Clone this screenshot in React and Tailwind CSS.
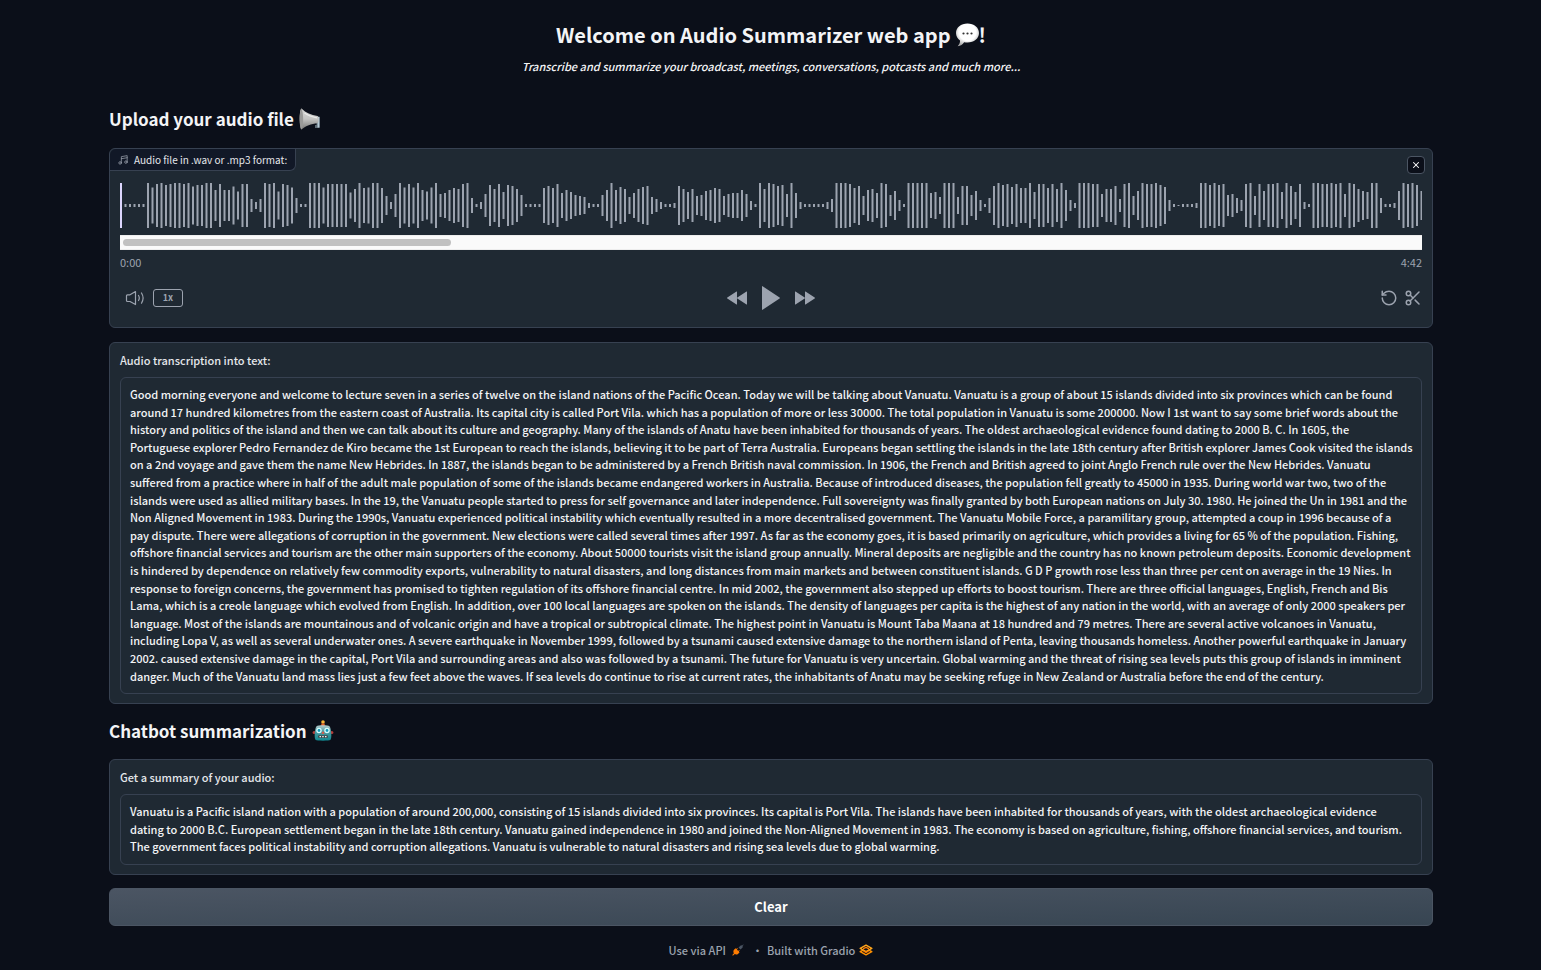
import { Scissors, RotateCcw, X } from "lucide-react";

const BARS = [
  45, 3, 3, 3, 3, 3, 45, 36, 43, 45, 41, 43, 45, 45, 43, 45, 38, 41, 41, 45, 45, 31, 43, 31, 31, 38, 28, 43, 43, 13,
  7, 13, 45, 43, 45, 28, 43, 41, 36, 15, 3, 3, 45, 45, 45, 36, 43, 43, 43, 43, 43, 26, 33, 45, 35, 36, 45, 45, 35, 19,
  7, 23, 45, 36, 43, 36, 45, 31, 28, 36, 45, 23, 25, 31, 35, 33, 43, 45, 15, 3, 7, 23, 41, 33, 43, 27, 41, 39, 33, 21,
  3, 3, 3, 3, 35, 39, 35, 43, 25, 31, 27, 21, 19, 17, 5, 3, 3, 21, 31, 45, 31, 37, 33, 17, 25, 33, 37, 39, 17, 13,
  7, 3, 3, 5, 39, 33, 27, 33, 19, 21, 29, 31, 35, 33, 19, 23, 25, 25, 31, 23, 9, 3, 45, 33, 45, 43, 39, 41, 23, 45,
  25, 7, 3, 3, 3, 3, 3, 7, 13, 45, 45, 45, 43, 35, 39, 19, 31, 33, 25, 45, 43, 21, 29, 11, 3, 45, 45, 45, 45, 45,
  25, 27, 17, 45, 45, 45, 17, 39, 39, 21, 29, 11, 3, 15, 39, 45, 41, 43, 37, 43, 35, 35, 45, 27, 43, 43, 35, 43, 33, 45,
  31, 11, 5, 45, 45, 45, 43, 43, 23, 33, 33, 39, 13, 43, 45, 19, 29, 45, 43, 43, 45, 41, 37, 11, 3, 1, 3, 3, 3, 5,
  45, 45, 41, 45, 41, 43, 21, 23, 15, 11, 43, 45, 19, 43, 29, 43, 43, 45, 27, 45, 39, 27, 43, 7, 3, 45, 45, 43, 43, 45,
  43, 45, 23, 45, 43, 33, 29, 27, 45, 45, 15, 3, 3, 5, 29, 45, 43, 45, 41, 29,
];

const TRANSCRIPT = [
  "Good morning everyone and welcome to lecture seven in a series of twelve on the island nations of the Pacific Ocean. Today we will be talking about Vanuatu. Vanuatu is a group of about 15 islands divided into six provinces which can be found",
  "around 17 hundred kilometres from the eastern coast of Australia. Its capital city is called Port Vila. which has a population of more or less 30000. The total population in Vanuatu is some 200000. Now I 1st want to say some brief words about the",
  "history and politics of the island and then we can talk about its culture and geography. Many of the islands of Anatu have been inhabited for thousands of years. The oldest archaeological evidence found dating to 2000 B. C. In 1605, the",
  "Portuguese explorer Pedro Fernandez de Kiro became the 1st European to reach the islands, believing it to be part of Terra Australia. Europeans began settling the islands in the late 18th century after British explorer James Cook visited the islands",
  "on a 2nd voyage and gave them the name New Hebrides. In 1887, the islands began to be administered by a French British naval commission. In 1906, the French and British agreed to joint Anglo French rule over the New Hebrides. Vanuatu",
  "suffered from a practice where in half of the adult male population of some of the islands became endangered workers in Australia. Because of introduced diseases, the population fell greatly to 45000 in 1935. During world war two, two of the",
  "islands were used as allied military bases. In the 19, the Vanuatu people started to press for self governance and later independence. Full sovereignty was finally granted by both European nations on July 30. 1980. He joined the Un in 1981 and the",
  "Non Aligned Movement in 1983. During the 1990s, Vanuatu experienced political instability which eventually resulted in a more decentralised government. The Vanuatu Mobile Force, a paramilitary group, attempted a coup in 1996 because of a",
  "pay dispute. There were allegations of corruption in the government. New elections were called several times after 1997. As far as the economy goes, it is based primarily on agriculture, which provides a living for 65 % of the population. Fishing,",
  "offshore financial services and tourism are the other main supporters of the economy. About 50000 tourists visit the island group annually. Mineral deposits are negligible and the country has no known petroleum deposits. Economic development",
  "is hindered by dependence on relatively few commodity exports, vulnerability to natural disasters, and long distances from main markets and between constituent islands. G D P growth rose less than three per cent on average in the 19 Nies. In",
  "response to foreign concerns, the government has promised to tighten regulation of its offshore financial centre. In mid 2002, the government also stepped up efforts to boost tourism. There are three official languages, English, French and Bis",
  "Lama, which is a creole language which evolved from English. In addition, over 100 local languages are spoken on the islands. The density of languages per capita is the highest of any nation in the world, with an average of only 2000 speakers per",
  "language. Most of the islands are mountainous and of volcanic origin and have a tropical or subtropical climate. The highest point in Vanuatu is Mount Taba Maana at 18 hundred and 79 metres. There are several active volcanoes in Vanuatu,",
  "including Lopa V, as well as several underwater ones. A severe earthquake in November 1999, followed by a tsunami caused extensive damage to the northern island of Penta, leaving thousands homeless. Another powerful earthquake in January",
  "2002. caused extensive damage in the capital, Port Vila and surrounding areas and also was followed by a tsunami. The future for Vanuatu is very uncertain. Global warming and the threat of rising sea levels puts this group of islands in imminent",
  "danger. Much of the Vanuatu land mass lies just a few feet above the waves. If sea levels do continue to rise at current rates, the inhabitants of Anatu may be seeking refuge in New Zealand or Australia before the end of the century.",
].join("\n");

const SUMMARY = [
  "Vanuatu is a Pacific island nation with a population of around 200,000, consisting of 15 islands divided into six provinces. Its capital is Port Vila. The islands have been inhabited for thousands of years, with the oldest archaeological evidence",
  "dating to 2000 B.C. European settlement began in the late 18th century. Vanuatu gained independence in 1980 and joined the Non-Aligned Movement in 1983. The economy is based on agriculture, fishing, offshore financial services, and tourism.",
  "The government faces political instability and corruption allegations. Vanuatu is vulnerable to natural disasters and rising sea levels due to global warming.",
].join("\n");

function SpeechBubble() {
  return (
    <svg className="size-6 shrink-0" viewBox="0 0 24 24" aria-hidden="true">
      <defs>
        <radialGradient id="bubble" cx="0.5" cy="0.38" r="0.62">
          <stop offset="0.6" stopColor="#ffffff" />
          <stop offset="1" stopColor="#a9a9a9" />
        </radialGradient>
      </defs>
      <path d="M12.500 0.500C6 0.500 1 4.500 1 10c0 3.200 1.600 5.800 4 7.500 0.200 2-0.700 4-2.300 5.700 3-0.300 5-1.700 6.400-3.900 1.100 0.200 2.200 0.200 3.400 0.200C19 19.500 24 15.500 24 10S19 0.500 12.500 0.500z" fill="url(#bubble)" />
      <circle cx="8.500" cy="10.500" r="1.100" fill="#333" />
      <circle cx="12.500" cy="10.500" r="1.100" fill="#333" />
      <circle cx="16.500" cy="10.500" r="1.100" fill="#333" />
    </svg>
  );
}

function Megaphone() {
  return (
    <svg className="size-6 shrink-0" viewBox="0 0 24 24" aria-hidden="true">
      <defs>
        <linearGradient id="horn" x1="0" y1="0" x2="0" y2="1">
          <stop offset="0" stopColor="#d8d8d6" />
          <stop offset="0.5" stopColor="#c4c4c2" />
          <stop offset="1" stopColor="#777775" />
        </linearGradient>
      </defs>
      <path d="M15 9.500h6.500V21h-4.500v-3h1.500v-5H15z" fill="#5d6b74" />
      <path d="M19.500 10h2v10.500h-2z" fill="#b8cdd8" />
      <path d="M3.500 1.500C8 6 13 8 19.500 9c1.500 0.500 1.500 6.500 0 7.200C13 17 8 18.500 3.500 22.500 1.200 21 1 3 3.500 1.500z" fill="url(#horn)" />
      <path d="M3.500 1.500c2 3 2.400 18 0 21C1.300 21 1 3 3.500 1.500z" fill="#9a9a98" />
      <path d="M6.500 6c4 3 8 4 12.500 4.800" stroke="#ffffff" strokeWidth="1.200" fill="none" opacity="0.600" />
    </svg>
  );
}

function Robot() {
  return (
    <svg className="size-6 shrink-0" viewBox="0 0 24 24" aria-hidden="true">
      <defs>
        <linearGradient id="face" x1="0" y1="0" x2="0" y2="1">
          <stop offset="0" stopColor="#b9cfd0" />
          <stop offset="0.4" stopColor="#4f9aa0" />
          <stop offset="1" stopColor="#0f8790" />
        </linearGradient>
      </defs>
      <circle cx="12" cy="3" r="1.800" fill="#f5b638" />
      <path d="M10.300 4.500h3.400V7h-3.400z" fill="#e8682c" />
      <circle cx="3.200" cy="13.500" r="1.600" fill="#b83a36" />
      <circle cx="20.800" cy="13.500" r="1.600" fill="#b83a36" />
      <path d="M5.500 7.200C7 5.800 17 5.800 18.500 7.200 20.300 9.500 21 19 19.500 20.800c-1.500 1.200-13.500 1.200-15 0C3 19 3.700 9.500 5.500 7.200z" fill="url(#face)" />
      <circle cx="8" cy="11.500" r="2.700" fill="#d9ffff" />
      <circle cx="16" cy="11.500" r="2.700" fill="#d9ffff" />
      <circle cx="8" cy="11.500" r="1.400" fill="#1597b8" />
      <circle cx="16" cy="11.500" r="1.400" fill="#1597b8" />
      <path d="M12 12l1.600 2.800h-3.200z" fill="#f0513e" />
      <rect x="7" y="16.200" width="10" height="2.800" rx="1.200" fill="#3d4a4d" />
      <path d="M8.500 17.600h1.500M11.200 17.600h1.500M14 17.600h1.500" stroke="#f2f2f2" strokeWidth="1.400" />
    </svg>
  );
}

function MusicIcon() {
  return (
    <svg className="size-[10px] shrink-0 text-[#9ca3af]" viewBox="0 0 24 24" fill="none" stroke="currentColor" strokeWidth="1.800" strokeLinecap="round" strokeLinejoin="round" aria-hidden="true">
      <path d="M8 19V4l14-2.500V17" />
      <path d="M8 9l14-2.500" />
      <circle cx="5" cy="19" r="3" />
      <circle cx="19" cy="17" r="3" />
    </svg>
  );
}

function VolumeIcon() {
  return (
    <svg className="h-4 w-5" viewBox="0 0 20 16" fill="none" stroke="currentColor" strokeWidth="1.200" strokeLinecap="round" strokeLinejoin="round" aria-hidden="true">
      <path d="M1.500 6v4.500q0 1 1 1h2.500l5.500 3V1.500L5 4.800H2.500q-1 0-1 1.200z" />
      <path d="M13.500 5.500q1.600 2.500 0 5M16.500 3q3.200 5 0 10.200" />
    </svg>
  );
}

function PlugIcon() {
  return (
    <svg className="size-3" viewBox="0 0 12 12" aria-hidden="true">
      <path d="M6.500 3.500L9 1.200l1 .3L11.300.4l.4.4-1.100 1.200.2 1.200L8.500 5.600z" fill="#4b5563" />
      <path d="M2 5.800l1.500-1.600.8.800.9-.9.600.6-.9.900 1.300 1.300.9-.9.600.6-.9.900.8.800L6 9.900c-1.200.9-2.500.7-3.200.2L.9 11.700l-.6-.6L1.900 9.300C1.200 8.200 1.200 6.800 2 5.800z" fill="#ff7c00" />
    </svg>
  );
}

function GradioLogo() {
  return (
    <svg className="h-3 w-[14px]" viewBox="0 0 14 12" fill="none" strokeLinejoin="round" strokeLinecap="round" aria-hidden="true">
      <path d="M1.200 7.600L4.200 6.100M9.800 6.100l3 1.500L7 10.800 1.200 7.600" stroke="#ff9000" strokeWidth="1.500" />
      <path d="M7 1.200l5.800 3.200L7 7.600 1.200 4.400z" stroke="#ffa51c" strokeWidth="1.500" />
      <path d="M4.500 4.600l2.500-1.200 2.500 1.200M4.800 7.200L7 8.400l2.200-1.200" stroke="#ff7c00" strokeWidth="1.200" />
    </svg>
  );
}

function Waveform() {
  return (
    <svg className="block h-[45px] w-full" viewBox="0 0 1302 45" preserveAspectRatio="none" role="img" aria-label="Audio waveform">
      {BARS.map((height, index) => (
        <rect key={index} x={index * 4.5} y={(45 - height) / 2} width="2" height={height} fill="#9ca3af" />
      ))}
      <rect x="0" y="0" width="2" height="45" fill="#ddd6fe" />
    </svg>
  );
}

function TextPanel({ id, label, value, rows }) {
  return (
    <section className="rounded-md border border-[#374151] bg-[#1f2933] px-[10px] pt-2 pb-[9px]">
      <label htmlFor={id} className="mb-2 block text-[11px] leading-[18px] font-medium text-[#e5e7eb]">
        {label}
      </label>
      <textarea
        id={id}
        readOnly
        rows={rows}
        defaultValue={value}
        className="block field-sizing-content w-full resize-none overflow-hidden rounded-md border border-[#374151] bg-transparent py-2 pr-1 pl-[9px] text-[11px] leading-[1.6] font-medium text-[#f3f4f6] outline-none"
      />
    </section>
  );
}

export default function App() {
  return (
    <div className="min-h-screen bg-[#0b0f19] font-['Noto_Sans_CJK_SC',sans-serif] text-[#f3f4f6]">
      <main className="pr-[108px] pb-2 pl-[109px]">
        <header className="flex flex-col items-center pt-[19px]">
          <h1 className="flex items-center gap-1 text-[20px] leading-8 font-bold">
            <span>Welcome on Audio Summarizer web app</span>
            <span className="flex items-center">
              <SpeechBubble />!
            </span>
          </h1>
          <p className="mt-1 text-[11px] leading-[22px] font-medium italic">
            Transcribe and summarize your broadcast, meetings, conversations, potcasts and much more...
          </p>
        </header>

        <h2 className="mt-7 flex items-center gap-1 text-[17px] leading-7 font-bold">
          Upload your audio file <Megaphone />
        </h2>

        <section className="relative mt-[15px] rounded-md border border-[#374151] bg-[#1f2933] px-[10px] pt-[34px] pb-[14px] text-[#9ca3af]">
          <div className="absolute top-0 left-0 flex h-[22px] items-center gap-[6px] rounded-tl-md rounded-br-md border-r border-b border-[#374151] bg-[#111827] px-2 text-[10px] text-[#e5e7eb]">
            <MusicIcon />
            <span>Audio file in .wav or .mp3 format:</span>
          </div>
          <button type="button" aria-label="Clear audio" className="absolute top-[7px] right-[7px] flex size-[18px] items-center justify-center rounded-sm border border-[#4b5563] bg-[#0b0f19] text-white">
            <X className="size-[10px]" strokeWidth={2.5} />
          </button>
          <Waveform />
          <div className="mt-[7px] h-[15px] border-y border-[#ededed] bg-[#fafafa] px-[3px] py-[3px]">
            <div className="h-full w-[328px] rounded-full bg-[#c1c1c1]" />
          </div>
          <div className="mt-[3px] flex justify-between text-[11px] leading-[18px]">
            <time>0:00</time>
            <time>4:42</time>
          </div>
          <div className="mt-3 grid h-[30px] grid-cols-3 items-center">
            <div className="flex items-center gap-2 pl-[5px]">
              <button type="button" aria-label="Volume">
                <VolumeIcon />
              </button>
              <button type="button" aria-label="Playback speed" className="h-[18px] w-[30px] rounded-[3px] border border-[#9ca3af] text-[9px] leading-4 font-bold">
                1x
              </button>
            </div>
            <div className="flex items-center justify-center gap-[15px]">
              <button type="button" aria-label="Skip backwards">
                <svg className="h-[14px] w-5" viewBox="0 0 20 14" fill="currentColor" aria-hidden="true">
                  <path d="M9.500 0.500q.5-.3.500.3v12.400q0 .6-.5.300L0.300 7.400q-.5-.4 0-.8zM19.500 0.500q.5-.3.500.3v12.400q0 .6-.5.300L10.300 7.400q-.5-.4 0-.8z" />
                </svg>
              </button>
              <button type="button" aria-label="Play">
                <svg className="h-6 w-[18px]" viewBox="0 0 18 24" fill="currentColor" aria-hidden="true">
                  <path d="M0 0.500q0-.7.600-.3l17 11.300q.6.500 0 1L.6 23.800q-.6.400-.6-.3z" />
                </svg>
              </button>
              <button type="button" aria-label="Skip forwards">
                <svg className="h-[14px] w-5" viewBox="0 0 20 14" fill="currentColor" aria-hidden="true">
                  <path d="M.5 0.500Q0 .2 0 .8v12.400q0 .6.500.300L9.700 7.400q.5-.4 0-.8zM10.500 0.500q-.5-.3-.5.3v12.400q0 .6.500.3l9.200-6.100q.5-.4 0-.8z" />
                </svg>
              </button>
            </div>
            <div className="flex items-center justify-end gap-[6px]">
              <button type="button" aria-label="Undo">
                <RotateCcw className="size-[18px]" />
              </button>
              <button type="button" aria-label="Trim audio">
                <Scissors className="size-[18px]" />
              </button>
            </div>
          </div>
        </section>

        <div className="mt-[14px]">
          <TextPanel id="transcript" label="Audio transcription into text:" value={TRANSCRIPT} rows={17} />
        </div>

        <h2 className="mt-[13px] mb-[14px] flex items-center gap-1 text-[17px] leading-7 font-bold">
          Chatbot summarization <Robot />
        </h2>

        <TextPanel id="summary" label="Get a summary of your audio:" value={SUMMARY} rows={3} />

        <button type="button" className="mt-[13px] h-[38px] w-full rounded-md border border-[#4b5563] bg-linear-to-br from-[#4b5563] to-[#374552] text-[13px] font-bold text-white">
          Clear
        </button>

        <footer className="mt-[14px] flex items-center justify-center text-[11px] leading-5 font-medium text-[#9ca3af]">
          <a href="#api" className="flex items-center gap-[6px]">
            Use via API <PlugIcon />
          </a>
          <span className="mr-1 ml-2">·</span>
          <a href="#gradio" className="flex items-center gap-1">
            Built with Gradio <GradioLogo />
          </a>
        </footer>
      </main>
    </div>
  );
}
